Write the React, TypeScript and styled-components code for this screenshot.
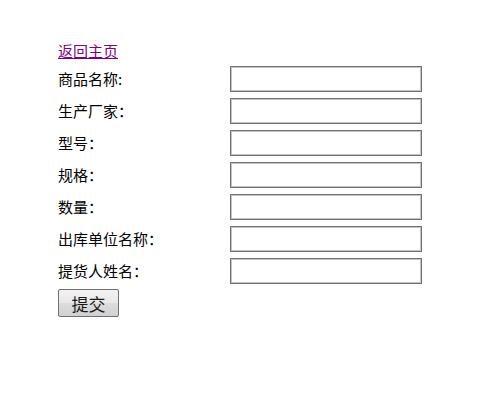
import React from "react";
import styled, { createGlobalStyle } from "styled-components";

const Global = createGlobalStyle`
  html, body { margin: 0; padding: 0; background: #fff; }
  body { font-family: "Noto Sans CJK SC", "Liberation Sans", sans-serif; }
`;

const Page = styled.div`
  padding: 40px 0 0 58px;
  display: flex;
  flex-direction: column;
  align-items: flex-start;
`;

const HomeLink = styled.a`
  font-size: 15px;
  line-height: 22px;
  color: #800080;
  text-decoration: underline;
  margin-bottom: 4px;
`;

const Form = styled.form`
  display: grid;
  grid-template-columns: 172px 192px;
  row-gap: 6px;
  align-items: center;
`;

const Label = styled.label`
  font-size: 15px;
  line-height: 20px;
  color: #000;
`;

const Input = styled.input`
  box-sizing: border-box;
  width: 192px;
  height: 26px;
  margin: 0;
  padding: 1px 3px;
  border: 1px solid #707070;
  box-shadow: inset 0 0 0 1px #c4c4c4;
  background: #fff;
  font-size: 14px;
  outline: none;
`;

const Submit = styled.button`
  grid-column: 1;
  margin-top: -1px;
  width: 61px;
  height: 28px;
  box-sizing: border-box;
  border: 1px solid #707070;
  border-radius: 2px;
  background: linear-gradient(#f2f2f2, #e8e8e8 50%, #dddddd 51%, #d0d0d0);
  font-family: "Noto Sans CJK SC", sans-serif;
  font-size: 17px;
  line-height: 1;
  color: #1a1a1a;
  padding: 0;
`;

const fields = [
  "商品名称:",
  "生产厂家：",
  "型号：",
  "规格：",
  "数量：",
  "出库单位名称：",
  "提货人姓名：",
];

export default function App() {
  return (
    <>
      <Global />
      <Page>
        <HomeLink href="#">返回主页</HomeLink>
        <Form onSubmit={(e) => e.preventDefault()}>
          {fields.map((f, i) => (
            <React.Fragment key={i}>
              <Label htmlFor={`f${i}`}>{f}</Label>
              <Input id={`f${i}`} type="text" />
            </React.Fragment>
          ))}
          <Submit type="submit">提交</Submit>
        </Form>
      </Page>
    </>
  );
}
